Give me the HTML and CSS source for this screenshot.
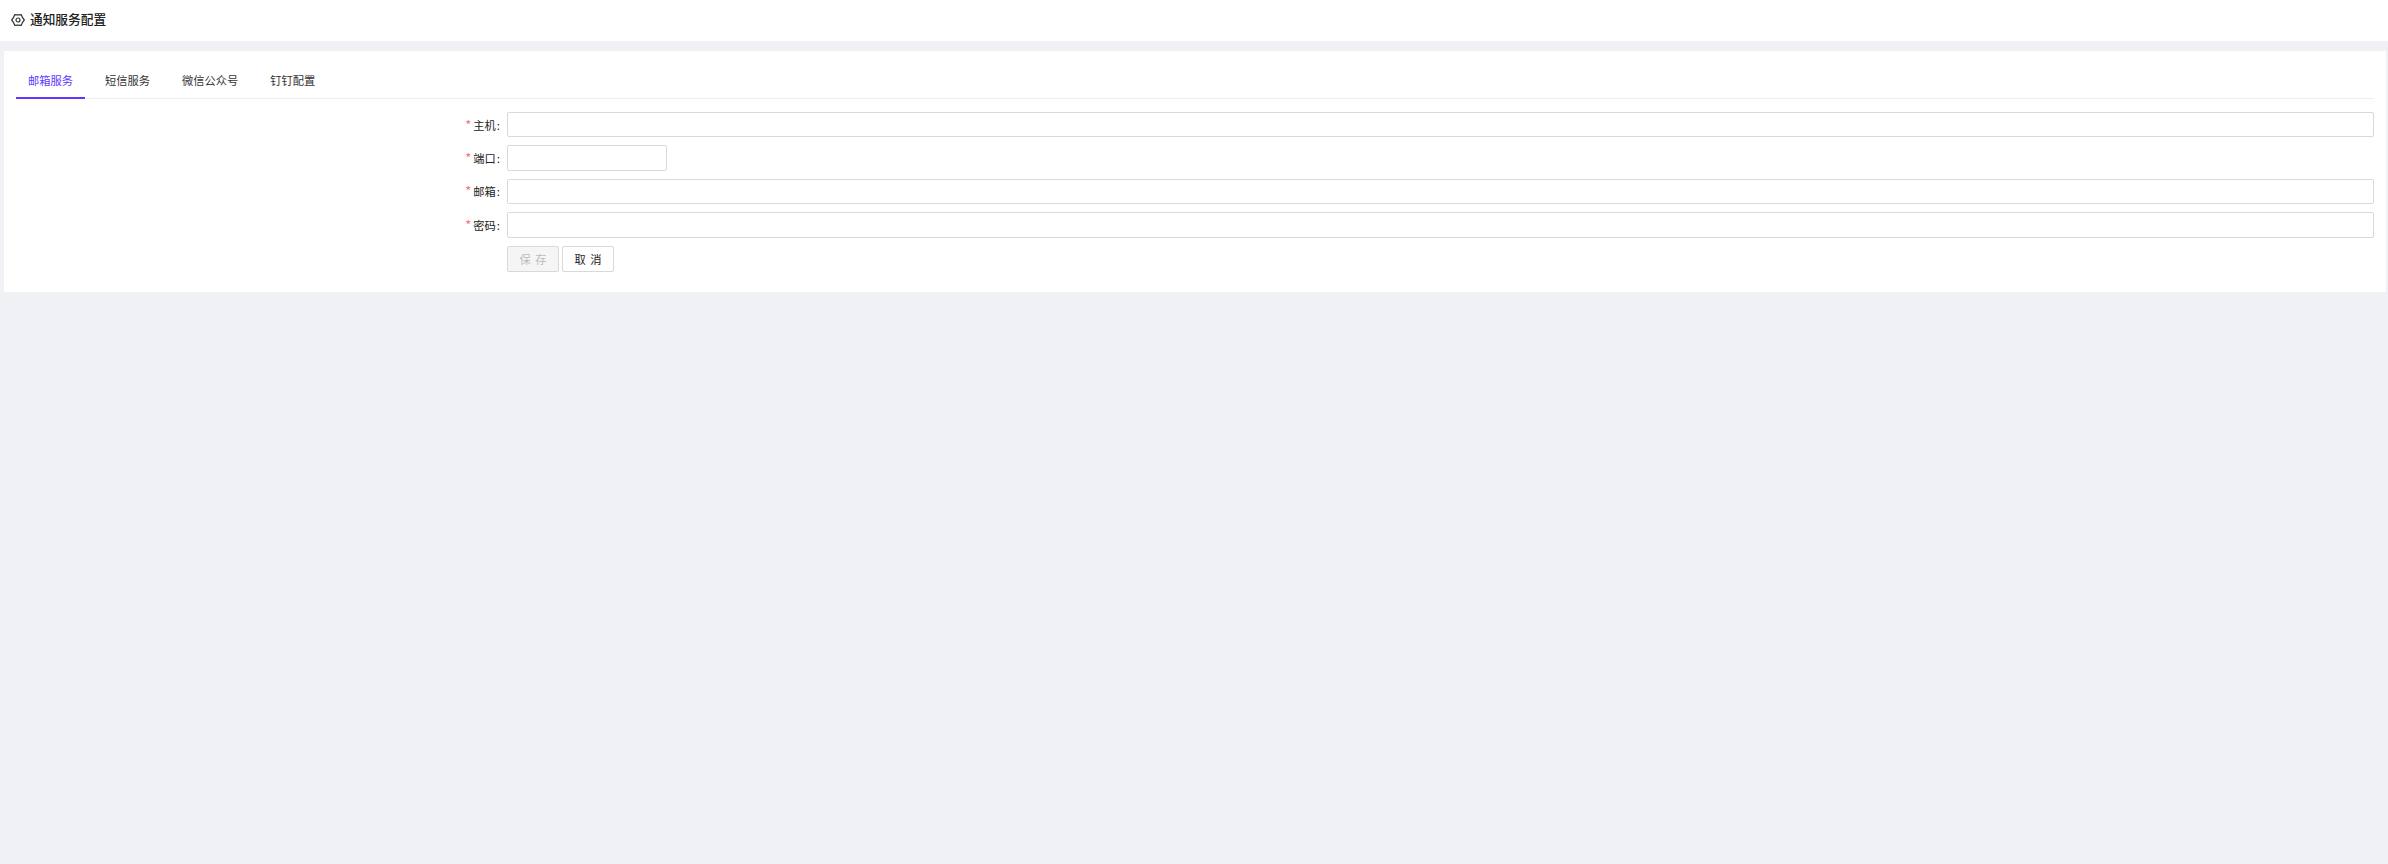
FILE: index.html
```html
<!DOCTYPE html>
<html lang="zh-CN">
    <head>
        <meta charset="utf-8">
        <title>通知服务配置</title>
        <link rel="stylesheet" href="styles.css">
    </head>
    <body>
        <div class="pageHeader">
            <svg class="headerIcon" viewBox="0 0 14 14" fill="none" stroke="#333" stroke-width="1.2" stroke-linejoin="round">
                <path d="M3.85 1.54Q7 2.2 10.15 1.54Q11.16 4.6 13.3 7Q11.16 9.4 10.15 12.46Q7 11.8 3.85 12.46Q2.84 9.4 .7 7Q2.84 4.6 3.85 1.54z"/>
                <circle cx="7" cy="7" r="2"/>
            </svg>
            <span class="headerTitle">通知服务配置</span>
        </div>
        <div class="card">
            <div class="tabs">
                <div class="tab tabActive">邮箱服务</div>
                <div class="tab">短信服务</div>
                <div class="tab">微信公众号</div>
                <div class="tab">钉钉配置</div>
            </div>
            <form class="configForm">
                <div class="formRow">
                    <label class="formLabel"><span class="required">*</span>主机<span class="colon">:</span></label>
                    <input class="formInput" type="text">
                </div>
                <div class="formRow">
                    <label class="formLabel"><span class="required">*</span>端口<span class="colon">:</span></label>
                    <input class="formInput inputShort" type="text">
                </div>
                <div class="formRow">
                    <label class="formLabel"><span class="required">*</span>邮箱<span class="colon">:</span></label>
                    <input class="formInput" type="text">
                </div>
                <div class="formRow">
                    <label class="formLabel"><span class="required">*</span>密码<span class="colon">:</span></label>
                    <input class="formInput" type="password">
                </div>
                <div class="formRow">
                    <div class="formLabel"></div>
                    <div class="formButtons">
                        <button class="btn btnDisabled" type="button" disabled>保 存</button>
                        <button class="btn" type="button">取 消</button>
                    </div>
                </div>
            </form>
        </div>
    </body>
</html>
```

FILE: styles.css
```css
body {
    margin: 0;
    min-height: 864px;
    background-color: #f0f1f5;
    font-family: "Noto Sans CJK SC", "Liberation Sans", sans-serif;
    font-size: 11.25px;
    color: #333;
}

.pageHeader {
    display: flex;
    align-items: center;
    box-sizing: border-box;
    height: 41px;
    padding: 0 0 5px 11px;
    background-color: #fff;
}

.headerIcon {
    width: 14px;
    height: 14px;
    margin: 4px 5px 0 0;
}

.headerTitle {
    font-size: 12.7px;
    font-weight: 500;
    color: #222;
}

.card {
    margin: 10px 2px 0 4px;
    height: 241px;
    box-sizing: border-box;
    padding: 12px 12px 0 12px;
    background-color: #fff;
}

.tabs {
    display: flex;
    box-sizing: border-box;
    height: 36px;
    border-bottom: 1px solid #eee;
}

.tab {
    box-sizing: border-box;
    height: 36px;
    padding: 0 12px;
    margin-right: 8px;
    line-height: 35px;
    color: #333;
}

.tabActive {
    color: #6236ff;
    border-bottom: 2px solid #6236ff;
}

.configForm {
    display: flex;
    flex-direction: column;
    gap: 8px;
    padding-top: 13px;
}

.formRow {
    display: flex;
    align-items: center;
    height: 25.4px;
}

.formLabel {
    box-sizing: border-box;
    flex: none;
    width: 491px;
    padding-right: 7px;
    text-align: right;
    line-height: 24px;
    color: #222;
}

.required {
    margin-right: 2px;
    font-size: 13px;
    color: #f7727f;
}

.colon {
    margin-left: 1px;
}

.formInput {
    box-sizing: border-box;
    flex: 1;
    height: 25.4px;
    margin: 0;
    border: 1px solid #d9d9d9;
    border-radius: 2px;
    background-color: #fff;
}

.inputShort {
    flex: none;
    width: 160px;
}

.formButtons {
    display: flex;
    gap: 3px;
    margin-top: 1px;
}

.btn {
    box-sizing: border-box;
    width: 52px;
    height: 26px;
    padding: 0;
    border: 1px solid #d9d9d9;
    border-radius: 2px;
    background-color: #fff;
    font-family: inherit;
    font-size: 11.25px;
    word-spacing: 2px;
    color: #222;
}

.btnDisabled {
    background-color: #f5f5f5;
    color: #bbb;
}
```
